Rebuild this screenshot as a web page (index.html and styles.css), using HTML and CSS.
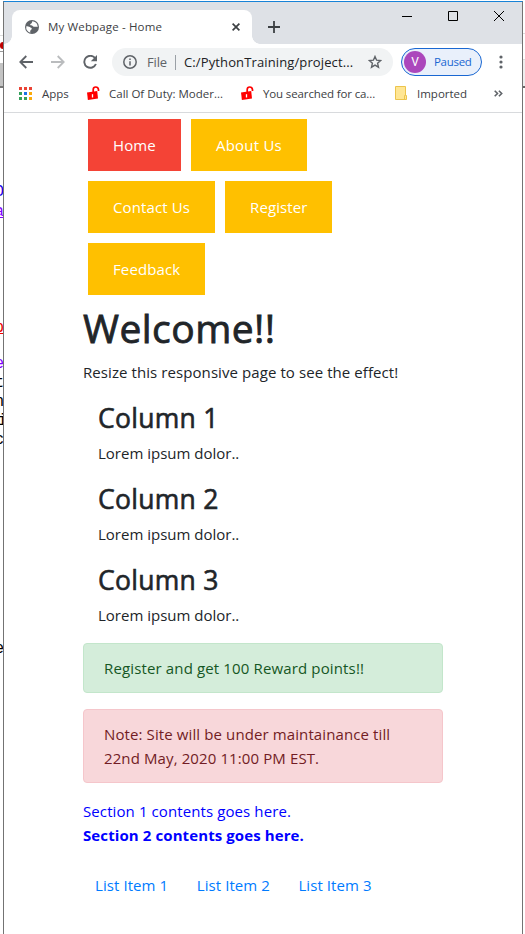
FILE: index.html
```html
<!DOCTYPE html>
<html lang="en">
<head>
<meta charset="utf-8">
<title>My Webpage - Home</title>
<link rel="stylesheet" href="styles.css">
</head>
<body>
<div class="desktop">
  <div class="behind-left" aria-hidden="true">
    <i class="rule r1"></i><i class="red-dot"></i><i class="rule r2"></i><i class="grey-box"></i>
    <span class="g g1">O</span><span class="g g2">a</span><span class="g g3">p</span><span class="g g4">e</span><span class="g g5">t</span><span class="g g6">n</span><span class="g g7">i</span><span class="g g8">c</span><span class="g g9">e</span>
  </div>
  <div class="window">
    <header class="tabstrip">
      <div class="tab">
        <svg class="globe" width="14" height="14" viewBox="0 0 14 14"><circle cx="7" cy="7" r="7" fill="#5f6368"/><path d="M7.8 1.3c-.9.4-1.1 1-.8 1.7-.6.6-1.7.6-1.8 1.5-.1.8.8.8 1.700 1 .9.3 1 1.100 1.900 1.300 1.100.2 2.300-.3 3.900.100A6 6 0 0 0 7.800 1.300zM1.300 6.200c1.300 0 2.600.200 3.500.900.800.700 1.900.500 2 1.600 0 1-1.200 1.100-1.500 2-.200.700-.1 1.400.1 2A6 6 0 0 1 1.300 6.200z" fill="#fff"/></svg>
        <span class="tab-title">My Webpage - Home</span>
        <svg class="tab-close" width="8" height="8" viewBox="0 0 8 8"><path d="M.6.6l6.800 6.800M7.400.6L.6 7.400" stroke="#3c4043" stroke-width="1.700"/></svg>
      </div>
      <svg class="plus" width="12" height="12" viewBox="0 0 12 12"><path d="M6 0v12M0 6h12" stroke="#3c4043" stroke-width="1.800"/></svg>
      <div class="controls">
        <svg width="10" height="10" viewBox="0 0 10 10"><path d="M0 5.500h10" stroke="#000"/></svg>
        <svg width="10" height="10" viewBox="0 0 10 10"><path d="M.5.5h9v9h-9z" fill="none" stroke="#000"/></svg>
        <svg width="10" height="10" viewBox="0 0 10 10"><path d="M0 0l10 10M10 0L0 10" stroke="#000"/></svg>
      </div>
    </header>
    <div class="toolbar">
      <svg class="back" width="14" height="14" viewBox="0 0 14 14"><path d="M14 7H1.500M7.300 1L1.300 7l6 6" fill="none" stroke="#5f6368" stroke-width="1.800"/></svg>
      <svg class="forward" width="14" height="14" viewBox="0 0 14 14"><path d="M0 7h12.500M6.700 1l6 6-6 6" fill="none" stroke="#babcbe" stroke-width="1.800"/></svg>
      <svg class="reload" width="15" height="14" viewBox="0 0 15 14"><path d="M12.200 3.300A6 6 0 1 0 12.900 9" fill="none" stroke="#5f6368" stroke-width="1.900"/><path d="M14 0v6.200H7.800z" fill="#5f6368"/></svg>
      <div class="omnibox">
        <svg class="info" width="14" height="14" viewBox="0 0 14 14"><circle cx="7" cy="7" r="6.200" fill="none" stroke="#5f6368" stroke-width="1.500"/><path d="M7 6.200v4.300M7 3.500V5" stroke="#5f6368" stroke-width="1.500"/></svg>
        <span class="scheme">File</span>
        <span class="url">C:/PythonTraining/project...</span>
        <svg class="star" width="14" height="14" viewBox="0 0 14 14"><path d="M7 1.500l1.600 3.700 4 .4-3 2.700.9 3.900L7 10.100l-3.500 2.100.9-3.900-3-2.700 4-.4z" fill="none" stroke="#5f6368" stroke-width="1.400"/></svg>
      </div>
      <div class="profile"><span class="avatar">V</span><span class="paused">Paused</span></div>
      <svg class="menu" width="4" height="14" viewBox="0 0 4 14"><g fill="#5f6368"><circle cx="2" cy="2" r="1.600"/><circle cx="2" cy="7" r="1.600"/><circle cx="2" cy="12" r="1.600"/></g></svg>
    </div>
    <nav class="bookmarks">
      <div class="bm apps">
        <svg width="13" height="13" viewBox="0 0 13 13" shape-rendering="crispEdges"><path d="M0 0h3v3H0zM5 0h3v3H5zM10 0h3v3h-3z" fill="#ea4335"/><path d="M0 5h3v3H0zM0 10h3v3H0zM5 10h3v3H5z" fill="#34a05a"/><path d="M5 5h3v3H5z" fill="#1a73e8"/><path d="M10 5h3v3h-3zM10 10h3v3h-3z" fill="#fbab0a"/></svg>
        <span>Apps</span>
      </div>
      <div class="bm cod">
        <svg width="13" height="14" viewBox="0 0 13 14"><path d="M0 6.500L10.200 5l.8 7.600L.9 14z" fill="#f00"/><path d="M6.200 6V3.500Q6.300 1 8.700 1T11.500 3.600V5" fill="none" stroke="#f00" stroke-width="1.700"/><path d="M5.500 8.200v3.300" stroke="#fff" stroke-width="1.300"/></svg>
        <span>Call Of Duty: Moder...</span>
      </div>
      <div class="bm search">
        <svg width="13" height="14" viewBox="0 0 13 14"><path d="M0 6.500L10.200 5l.8 7.600L.9 14z" fill="#f00"/><path d="M6.200 6V3.500Q6.300 1 8.700 1T11.500 3.600V5" fill="none" stroke="#f00" stroke-width="1.700"/><path d="M5.500 8.200v3.300" stroke="#fff" stroke-width="1.300"/></svg>
        <span>You searched for ca...</span>
      </div>
      <div class="bm imported">
        <svg width="12" height="14" viewBox="0 0 12 14"><path d="M.5.5h10v9h1v4H.5z" fill="#ffe694" stroke="#ecc44d"/><path d="M9.500 13V9.500h1" fill="none" stroke="#ecc44d"/></svg>
        <span>Imported</span>
      </div>
      <svg class="more" width="9" height="7" viewBox="0 0 9 7"><path d="M.7.7l2.800 2.800L.7 6.300M4.900.7l2.800 2.800-2.800 2.800" fill="none" stroke="#5f6368" stroke-width="1.600"/></svg>
    </nav>
    <main class="page">
      <nav class="buttons">
        <a class="btn active">Home</a><a class="btn about">About Us</a><a class="btn contact">Contact Us</a><a class="btn register">Register</a><a class="btn feedback">Feedback</a>
      </nav>
      <h1>Welcome!!</h1>
      <p class="intro">Resize this responsive page to see the effect!</p>
      <section class="column"><h3>Column 1</h3><p>Lorem ipsum dolor..</p></section>
      <section class="column"><h3>Column 2</h3><p>Lorem ipsum dolor..</p></section>
      <section class="column"><h3>Column 3</h3><p>Lorem ipsum dolor..</p></section>
      <div class="alert success">Register and get 100 Reward points!!</div>
      <div class="alert danger">Note: Site will be under maintainance till<br>22nd May, 2020 11:00 PM EST.</div>
      <div class="section">Section 1 contents goes here.</div>
      <div class="section bold">Section 2 contents goes here.</div>
      <ul class="list"><li>List Item 1</li><li>List Item 2</li><li>List Item 3</li></ul>
    </main>
  </div>
  <div class="behind-right" aria-hidden="true"></div>
</div>
</body>
</html>
```
FILE: styles.css
```css
* { box-sizing: border-box; }
body { margin: 0; background: #fff; font-family: "Open Sans", "Noto Sans", sans-serif; }
.desktop { display: flex; width: 525px; height: 934px; overflow: hidden; }
svg { display: block; flex: none; }
.behind-left { position: relative; width: 3px; flex: none; overflow: hidden; }
.behind-left i { position: absolute; left: 0; width: 3px; }
.r1 { top: 35px; height: 1px; background: #ddd; }
.red-dot { top: 42px; height: 7px; background: #c00000; border-radius: 3px 0 0 3px; }
.r2 { top: 51px; height: 1px; background: #999; }
.grey-box { top: 63px; height: 25px; background: #c3c3c3; border-bottom: 2px solid #777; }
.g { position: absolute; right: -1px; font: 16px/20px "Liberation Mono", monospace; color: #000; }
.g1 { top: 182px; color: #1e00e6; }
.g2 { top: 202px; color: #8000ff; text-decoration: underline; }
.g3 { top: 318px; color: #e00; text-decoration: underline; }
.g4 { top: 354px; color: #8000ff; }
.g5 { top: 373px; }
.g6 { top: 392px; }
.g7 { top: 411px; right: -4px; }
.g8 { top: 430px; }
.g9 { top: 639px; }
.behind-right { width: 2px; flex: none; background: linear-gradient(#fff 33px, #ddd 33px 34px, #fff 34px 59px, #ddd 59px 60px, #eee 60px 86px, #666 86px 88px, #fff 88px); }
.window { width: 520px; flex: none; border: 1px solid #737373; border-top-color: #1883d7; border-bottom: 0; margin-top: 1px; background: #fff; }
.window .tabstrip { display: flex; height: 42px; background: #dee1e6; padding: 8px 18px 0 8px; }
.tab { position: relative; display: flex; align-items: center; width: 240px; height: 34px; background: #fff; border-radius: 8px 8px 0 0; padding: 0 12px 0 13px; }
.tab::before, .tab::after { content: ""; position: absolute; bottom: 0; width: 8px; height: 8px; }
.tab::before { left: -8px; background: radial-gradient(circle at 0 0, #dee1e6 7.5px, #fff 8px); }
.tab::after { right: -8px; background: radial-gradient(circle at 100% 0, #dee1e6 7.5px, #fff 8px); }
.tab-title { margin-left: 9px; margin-top: -1px; font-size: 11.5px; letter-spacing: 0.15px; color: #3c4043; white-space: nowrap; }
.tab-close { margin-left: auto; }
.plus { margin: 11px 0 0 16px; }
.controls { display: flex; gap: 36px; margin-left: auto; padding-top: 1px; }
.toolbar { display: flex; align-items: center; height: 36px; padding: 0 15px; }
.forward { margin-left: 18px; }
.reload { margin-left: 18px; }
.omnibox { display: flex; align-items: center; width: 281px; height: 28px; margin-left: 14px; border-radius: 14px; background: #f1f3f4; padding: 0 11px; font-size: 13px; flex: none; white-space: nowrap; }
.scheme { margin-left: 10px; letter-spacing: -0.14px; color: #5f6368; }
.url { margin-left: 8px; padding-left: 9px; letter-spacing: 0.12px; color: #202124; background: linear-gradient(#9aa0a6, #9aa0a6) no-repeat left center / 1px 15px; }
.star { margin-left: auto; }
.profile { display: flex; align-items: center; width: 81px; height: 28px; margin-left: 8px; border: 1px solid #1967d2; border-radius: 14px; background: #e9f0fb; padding-left: 2px; color: #1967d2; flex: none; }
.avatar { width: 22px; height: 22px; border-radius: 50%; background: #ab47bc; color: #fff; text-align: center; font: 12px/22px Roboto, sans-serif; }
.paused { margin-left: 8px; margin-top: -1px; font-size: 11.5px; letter-spacing: -0.3px; }
.menu { margin-left: auto; margin-right: 4px; }
.bookmarks { display: flex; align-items: center; height: 33px; padding-left: 15px; border-bottom: 1px solid #d8dadd; padding-bottom: 6px; font-size: 11.5px; color: #3c4043; white-space: nowrap; }
.bm { display: flex; align-items: center; gap: 9px; flex: none; }
.apps { width: 68px; gap: 10px; }
.cod { width: 154px; }
.search { width: 154px; letter-spacing: -0.13px; }
.imported { gap: 10px; }
.more { margin-left: 27px; }
.page { width: 360px; margin-left: 79px; padding-top: 1px; color: #212529; font-size: 15px; line-height: 24px; letter-spacing: 0.08px; white-space: nowrap; }
.page p, .page h1, .page h3, .page ul { margin: 0; }
.buttons { display: flex; flex-wrap: wrap; width: 290px; }
.btn { height: 52px; margin: 5px; background: #ffc000; color: #fff; padding: 14px 0 14px 25px; letter-spacing: 0.12px; }
.active { width: 93px; background: #f44336; }
.about { width: 116px; letter-spacing: 0.22px; }
.contact { width: 127px; }
.register { width: 107px; }
.feedback { width: 117px; }
.page h1 { font-size: 39px; line-height: 48px; font-weight: 400; letter-spacing: 0.45px; -webkit-text-stroke: 0.8px #212529; margin-top: 4px; margin-bottom: 8px; }
.intro { height: 40px; }
.column { height: 81px; padding-left: 15px; }
.column p { letter-spacing: 0; }
.page h3 { font-size: 26.5px; line-height: 33px; font-weight: 400; letter-spacing: 0.3px; -webkit-text-stroke: 0.6px #212529; padding-top: 2px; margin-bottom: 6px; }
.alert { border: 1px solid; border-radius: 4px; padding: 12px 20px; margin-bottom: 16px; }
.success { color: #155724; background: #d4edda; border-color: #c3e6cb; letter-spacing: 0.14px; }
.danger { color: #721c24; background: #f8d7da; border-color: #f5c6cb; letter-spacing: 0.11px; }
.section { color: #00f; height: 24px; letter-spacing: 0.1px; }
.bold { font-weight: 700; }
.page .list { display: flex; list-style: none; padding: 0 0 0 12px; margin-top: 26px; color: #007bff; }
.list li { margin-right: 28.5px; }
```
